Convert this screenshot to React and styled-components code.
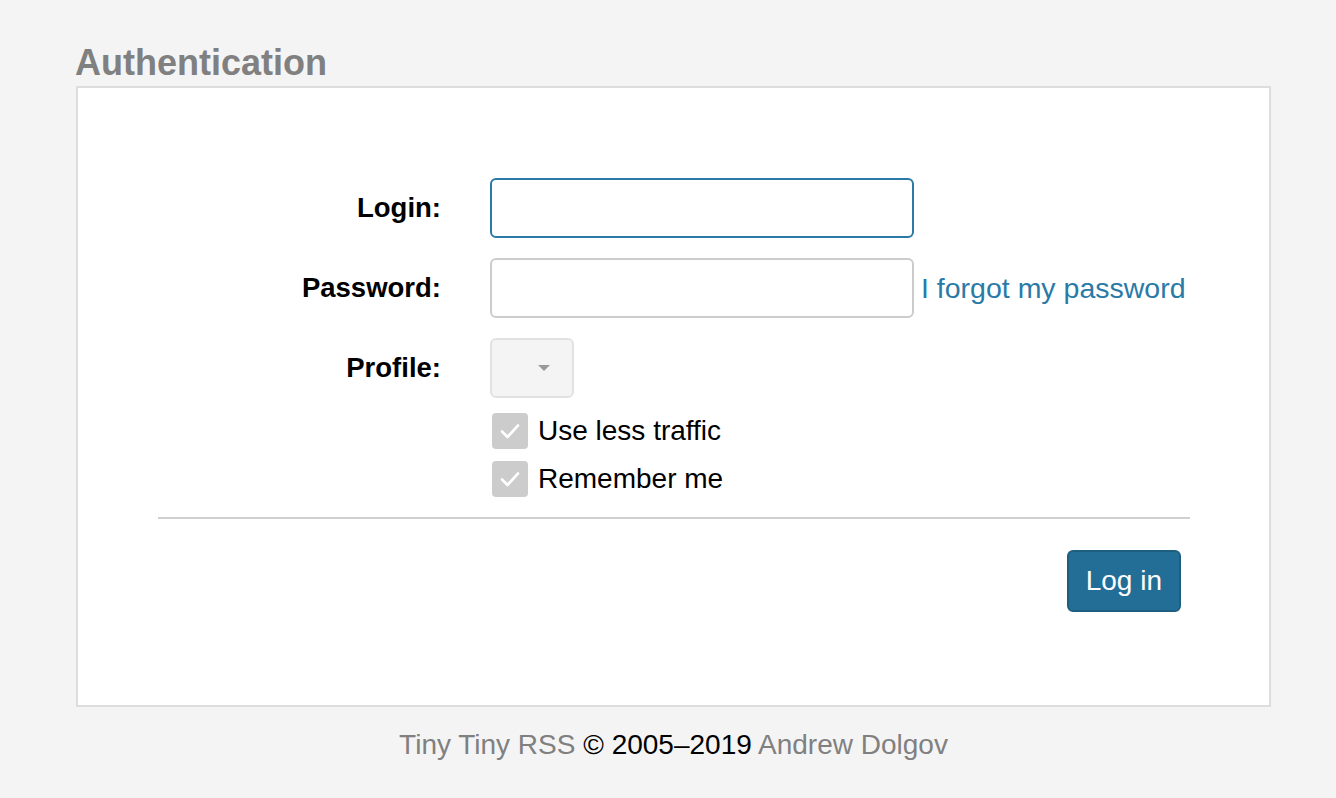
import React from 'react';
import styled, { createGlobalStyle } from 'styled-components';

const GlobalStyle = createGlobalStyle`
  html, body {
    margin: 0;
    padding: 0;
    background: #f4f4f4;
    font-family: "Liberation Sans", Arial, Helvetica, sans-serif;
  }
`;

const Page = styled.div`
  width: 1195px;
  margin: 0 0 0 76px;
  padding-top: 43px;
`;

const Title = styled.h1`
  margin: 0 0 3px -1px;
  font-size: 36px;
  line-height: 40px;
  font-weight: bold;
  color: #808080;
`;

const Panel = styled.div`
  background: #fff;
  border: 2px solid #dddddd;
  padding: 90px 79px 93px 80px;
`;

const Row = styled.div`
  display: flex;
  align-items: center;
  margin-top: ${({ $mt }) => $mt || 0}px;
`;

const Label = styled.label`
  width: 283px;
  margin-right: 49px;
  flex-shrink: 0;
  text-align: right;
  font-size: 27.5px;
  font-weight: bold;
  color: #000;
`;

const Field = styled.div`
  display: flex;
  align-items: center;
  gap: 7px;
`;

const Input = styled.input`
  width: 424px;
  height: 60px;
  box-sizing: border-box;
  border: 2px solid ${({ $focused }) => ($focused ? '#2a79a6' : '#cccccc')};
  border-radius: 6px;
  background: #fff;
  outline: none;
  font-size: 28px;
  padding: 0 10px;
  font-family: inherit;
`;

const LinkText = styled.a`
  font-size: 28.5px;
  color: #2a7aa8;
  text-decoration: none;
`;

const SelectBox = styled.div`
  width: 84px;
  height: 60px;
  box-sizing: border-box;
  border: 2px solid #e2e2e2;
  border-radius: 6px;
  background: #f4f4f4;
  display: flex;
  align-items: center;
  justify-content: flex-end;
  padding-right: 22px;
`;

const Caret = styled.span`
  width: 0;
  height: 0;
  border-left: 6px solid transparent;
  border-right: 6px solid transparent;
  border-top: 6px solid #999;
`;

const CheckRow = styled.label`
  display: flex;
  align-items: center;
  gap: 10px;
  margin-left: 2px;
  font-size: 28px;
  color: #000;
`;

const CheckBox = styled.span`
  width: 36px;
  height: 36px;
  border-radius: 4px;
  background: #cccccc;
  display: flex;
  align-items: center;
  justify-content: center;
`;

const Divider = styled.hr`
  border: none;
  border-top: 2px solid #d0d0d0;
  margin: 20px 0 0;
`;

const Actions = styled.div`
  display: flex;
  justify-content: flex-end;
  padding: 31px 9px 0 0;
`;

const Button = styled.button`
  height: 62px;
  padding: 0 17px;
  background: #236e96;
  border: 2px solid #1e5f80;
  border-radius: 6px;
  color: #fff;
  font-size: 28px;
  font-family: inherit;
`;

const Footer = styled.div`
  text-align: center;
  margin-top: 22px;
  font-size: 28px;
  color: #808080;
`;

const Copy = styled.span`
  color: #000;
`;

function Check() {
  return (
    <svg width="22" height="18" viewBox="0 0 22 18">
      <path d="M3 9.5 L8.5 15 L19 3.5" fill="none" stroke="#fff" strokeWidth="2.6" strokeLinecap="round" strokeLinejoin="round" />
    </svg>
  );
}

export default function App() {
  return (
    <>
      <GlobalStyle />
      <Page>
        <Title>Authentication</Title>
        <Panel>
          <Row>
            <Label>Login:</Label>
            <Field>
              <Input $focused type="text" />
            </Field>
          </Row>
          <Row $mt={20}>
            <Label>Password:</Label>
            <Field>
              <Input type="password" />
              <LinkText href="#">I forgot my password</LinkText>
            </Field>
          </Row>
          <Row $mt={20}>
            <Label>Profile:</Label>
            <Field>
              <SelectBox>
                <Caret />
              </SelectBox>
            </Field>
          </Row>
          <Row $mt={15}>
            <Label />
            <CheckRow>
              <CheckBox><Check /></CheckBox>
              Use less traffic
            </CheckRow>
          </Row>
          <Row $mt={12}>
            <Label />
            <CheckRow>
              <CheckBox><Check /></CheckBox>
              Remember me
            </CheckRow>
          </Row>
          <Divider />
          <Actions>
            <Button>Log in</Button>
          </Actions>
        </Panel>
        <Footer>
          Tiny Tiny RSS <Copy>© 2005–2019</Copy> Andrew Dolgov
        </Footer>
      </Page>
    </>
  );
}
